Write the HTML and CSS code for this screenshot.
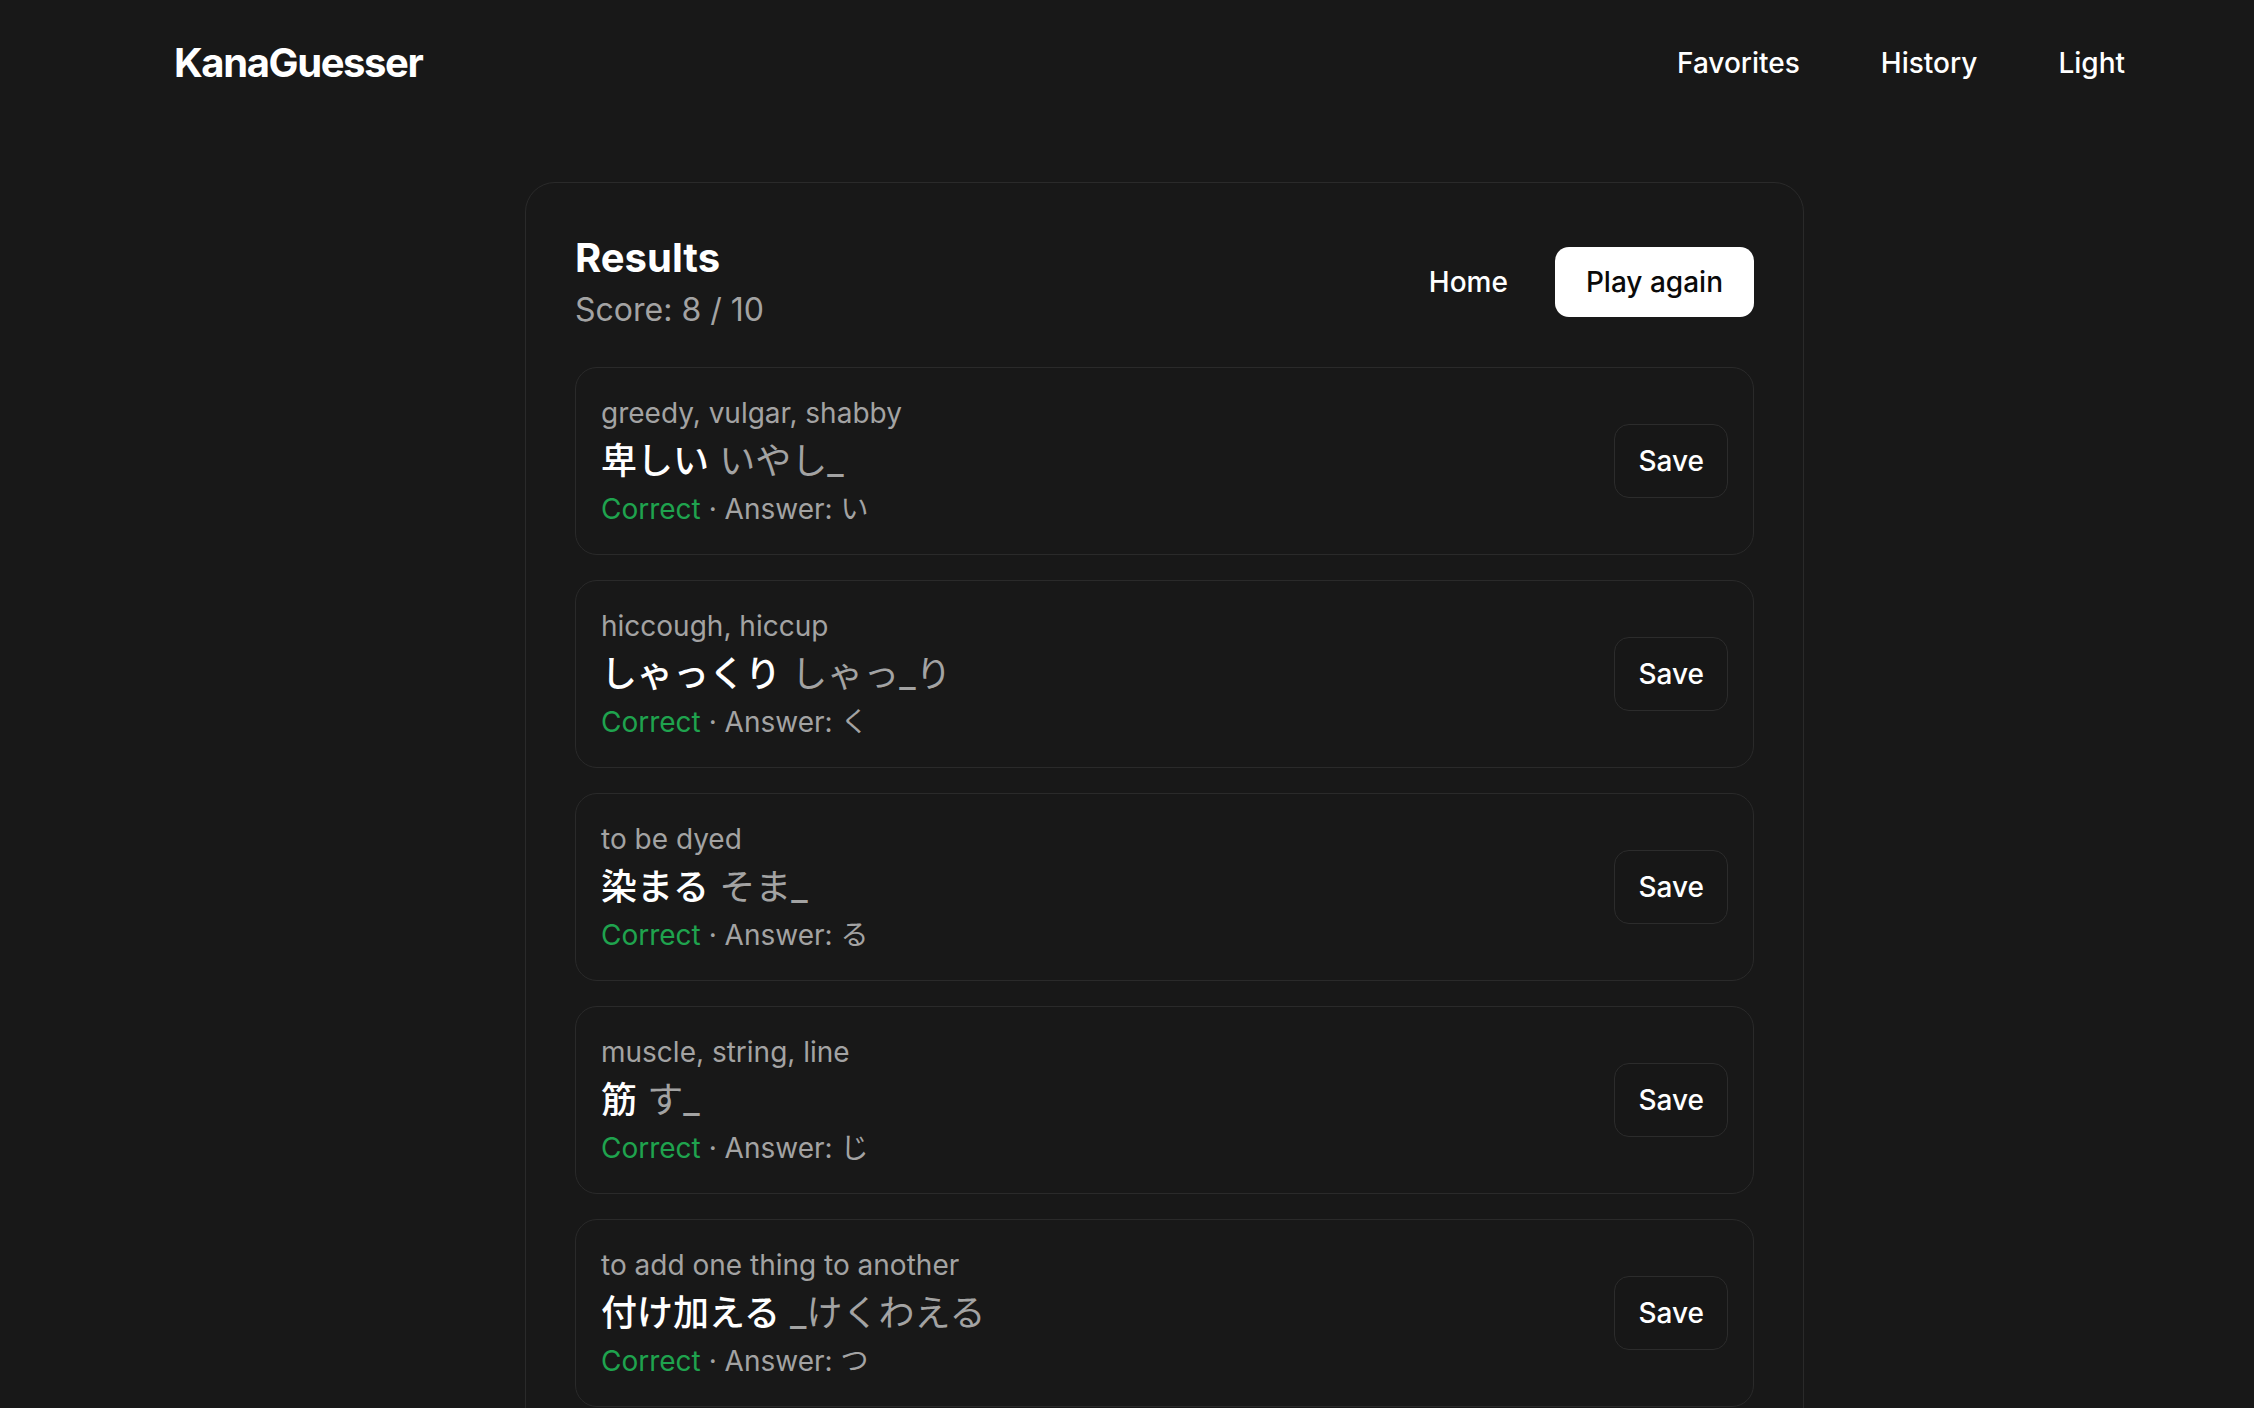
FILE: index.html
```html
<!DOCTYPE html>
<html lang="en">
<head>
<meta charset="utf-8">
<title>KanaGuesser</title>
<link rel="stylesheet" href="styles.css">
</head>
<body>
<header class="topbar">
  <a class="logo" href="#">KanaGuesser</a>
  <nav class="nav">
    <a href="#">Favorites</a>
    <a href="#">History</a>
    <a href="#">Light</a>
  </nav>
</header>
<main class="main">
  <section class="card">
    <div class="card-head">
      <div>
        <h1 class="title">Results</h1>
        <div class="score">Score: 8 / 10</div>
      </div>
      <div class="actions">
        <button class="btn btn-ghost">Home</button>
        <button class="btn btn-primary">Play again</button>
      </div>
    </div>
    <ul class="list">
      <li class="item">
        <div class="info">
          <div class="meaning">greedy, vulgar, shabby</div>
          <div class="word"><span class="kanji">卑しい</span> <span class="hint">いやし_</span></div>
          <div class="result"><span class="ok">Correct</span> · Answer: い</div>
        </div>
        <button class="btn btn-outline">Save</button>
      </li>
      <li class="item">
        <div class="info">
          <div class="meaning">hiccough, hiccup</div>
          <div class="word"><span class="kanji">しゃっくり</span> <span class="hint">しゃっ_り</span></div>
          <div class="result"><span class="ok">Correct</span> · Answer: く</div>
        </div>
        <button class="btn btn-outline">Save</button>
      </li>
      <li class="item">
        <div class="info">
          <div class="meaning">to be dyed</div>
          <div class="word"><span class="kanji">染まる</span> <span class="hint">そま_</span></div>
          <div class="result"><span class="ok">Correct</span> · Answer: る</div>
        </div>
        <button class="btn btn-outline">Save</button>
      </li>
      <li class="item">
        <div class="info">
          <div class="meaning">muscle, string, line</div>
          <div class="word"><span class="kanji">筋</span> <span class="hint">す_</span></div>
          <div class="result"><span class="ok">Correct</span> · Answer: じ</div>
        </div>
        <button class="btn btn-outline">Save</button>
      </li>
      <li class="item">
        <div class="info">
          <div class="meaning">to add one thing to another</div>
          <div class="word"><span class="kanji">付け加える</span> <span class="hint">_けくわえる</span></div>
          <div class="result"><span class="ok">Correct</span> · Answer: つ</div>
        </div>
        <button class="btn btn-outline">Save</button>
      </li>
      <li class="item">
        <div class="info">
          <div class="meaning">to eat</div>
          <div class="word"><span class="kanji">食べる</span> <span class="hint">た_る</span></div>
          <div class="result"><span class="bad">Wrong</span> · Answer: べ</div>
        </div>
        <button class="btn btn-outline">Save</button>
      </li>
      <li class="item">
        <div class="info">
          <div class="meaning">mountain</div>
          <div class="word"><span class="kanji">山</span> <span class="hint">や_</span></div>
          <div class="result"><span class="ok">Correct</span> · Answer: ま</div>
        </div>
        <button class="btn btn-outline">Save</button>
      </li>
      <li class="item">
        <div class="info">
          <div class="meaning">river, stream</div>
          <div class="word"><span class="kanji">川</span> <span class="hint">_わ</span></div>
          <div class="result"><span class="ok">Correct</span> · Answer: か</div>
        </div>
        <button class="btn btn-outline">Save</button>
      </li>
      <li class="item">
        <div class="info">
          <div class="meaning">to write</div>
          <div class="word"><span class="kanji">書く</span> <span class="hint">か_</span></div>
          <div class="result"><span class="bad">Wrong</span> · Answer: く</div>
        </div>
        <button class="btn btn-outline">Save</button>
      </li>
      <li class="item">
        <div class="info">
          <div class="meaning">flower</div>
          <div class="word"><span class="kanji">花</span> <span class="hint">は_</span></div>
          <div class="result"><span class="ok">Correct</span> · Answer: な</div>
        </div>
        <button class="btn btn-outline">Save</button>
      </li>
    </ul>
  </section>
</main>
</body>
</html>
```

FILE: styles.css
```css
* { box-sizing: border-box; }

html, body {
  margin: 0;
  padding: 0;
  background: #181818;
  color: #ffffff;
  font-family: Inter, "Noto Sans CJK JP", "Noto Sans", sans-serif;
}

a { color: inherit; text-decoration: none; }

.topbar {
  display: flex;
  align-items: center;
  justify-content: space-between;
  padding: 35px 129px 0 174px;
  height: 91px;
}

.logo {
  font-size: 40px;
  line-height: 56px;
  font-weight: 700;
  letter-spacing: -1.4px;
}

.nav {
  display: flex;
  gap: 81px;
  font-size: 28px;
  line-height: 40px;
  font-weight: 500;
}

.main {
  padding: 91px 0 0 525px;
}

.card {
  width: 1279px;
  border: 1px solid #2a2a2a;
  border-radius: 30px;
  padding: 49px;
}

.card-head {
  display: flex;
  align-items: center;
  justify-content: space-between;
  margin-bottom: 35px;
}

.title {
  margin: 0;
  font-size: 40px;
  line-height: 52px;
  font-weight: 700;
}

.score {
  margin-top: 4px;
  font-size: 32px;
  line-height: 44px;
  color: #a3a3a3;
}

.actions {
  display: flex;
  align-items: center;
  gap: 15px;
}

.btn {
  font-family: Inter, "Noto Sans CJK JP", sans-serif;
  font-size: 28px;
  line-height: 40px;
  font-weight: 500;
  border: none;
  background: transparent;
  color: #ffffff;
  cursor: pointer;
}

.btn-ghost {
  padding: 15px 32px;
  border-radius: 14px;
}

.btn-primary {
  padding: 15px 31px;
  border-radius: 14px;
  background: #ffffff;
  color: #0a0a0a;
}

.btn-outline {
  padding: 16px 23px;
  border: 1px solid #2c2c2c;
  border-radius: 15px;
  background: #171717;
}

.list {
  list-style: none;
  margin: 0;
  padding: 0;
  display: flex;
  flex-direction: column;
  gap: 25px;
}

.item {
  display: flex;
  align-items: center;
  justify-content: space-between;
  border: 1px solid #2a2a2a;
  border-radius: 22px;
  padding: 25px;
  background: #181818;
}

.meaning {
  font-size: 28px;
  line-height: 40px;
  color: #a3a3a3;
}

.word {
  font-size: 36px;
  line-height: 56px;
}

.kanji {
  font-weight: 500;
  color: #ffffff;
}

.hint {
  color: #a3a3a3;
}

.result {
  font-size: 28px;
  line-height: 40px;
  color: #a3a3a3;
}

.ok { color: #1fa34e; }
.bad { color: #e5484d; }
```
